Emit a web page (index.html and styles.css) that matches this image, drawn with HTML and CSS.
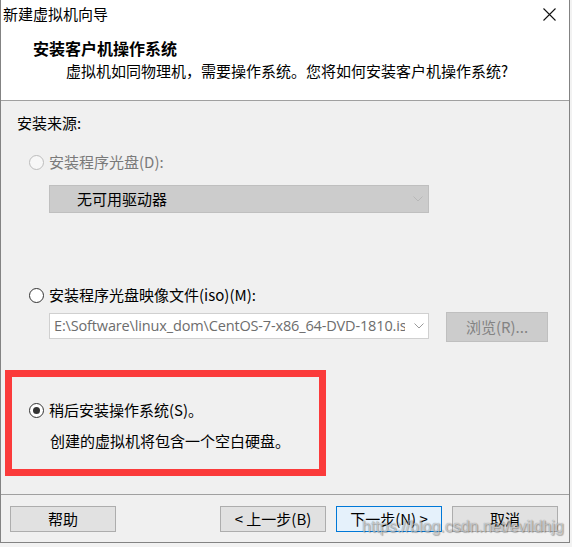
FILE: index.html
```html
<!DOCTYPE html>
<html lang="zh-CN">
<head>
<meta charset="utf-8">
<title>新建虚拟机向导</title>
<link rel="stylesheet" href="styles.css">
</head>
<body>
<div class="window">
  <div class="titlebar">
    <span class="title">新建虚拟机向导</span>
    <svg class="close" width="13" height="13" viewBox="0 0 13 13"><path d="M0.5 0.5 L12.5 12.5 M12.5 0.5 L0.5 12.5" stroke="#111" stroke-width="1.1" fill="none"/></svg>
  </div>
  <div class="header">
    <div class="heading">安装客户机操作系统</div>
    <div class="subtitle">虚拟机如同物理机，需要操作系统。您将如何安装客户机操作系统?</div>
  </div>
  <div class="content">
    <div class="section-label">安装来源:</div>
    <div class="radio-row row-disc disabled"><span class="radio"></span><span>安装程序光盘(D):</span></div>
    <div class="combo combo-disabled">
      <span class="combo-text">无可用驱动器</span>
      <svg class="chev" width="10" height="6" viewBox="0 0 10 6"><path d="M0.5 0.5 L5 5 L9.5 0.5" stroke="#b8b8b8" fill="none"/></svg>
    </div>
    <div class="radio-row row-iso"><span class="radio"></span><span>安装程序光盘映像文件(iso)(M):</span></div>
    <div class="iso-row">
      <div class="combo combo-iso">
        <span class="combo-text iso-text">E:\Software\linux_dom\CentOS-7-x86_64-DVD-1810.iso</span>
        <svg class="chev" width="10" height="6" viewBox="0 0 10 6"><path d="M0.5 0.5 L5 5 L9.5 0.5" stroke="#9a9a9a" fill="none"/></svg>
      </div>
      <div class="btn btn-disabled">浏览(R)...</div>
    </div>
    <div class="highlight">
      <div class="radio-row"><span class="radio checked"></span><span>稍后安装操作系统(S)。</span></div>
      <div class="desc">创建的虚拟机将包含一个空白硬盘。</div>
    </div>
  </div>
  <div class="footer">
    <div class="btn btn-help">帮助</div>
    <div class="nav">
      <div class="btn">&lt; 上一步(B)</div>
      <div class="btn btn-default">下一步(N) &gt;</div>
      <div class="btn">取消</div>
    </div>
  </div>
  <div class="watermark">https://blog.csdn.net/evildhjg</div>
</div>
</body>
</html>
```
FILE: styles.css
```css
* { box-sizing: border-box; }
html, body { margin: 0; padding: 0; }
body {
  background: #f2f2f2;
  font-family: "Noto Sans CJK SC", "Noto Sans", sans-serif;
  font-size: 15px;
  color: #000;
  width: 572px;
  height: 547px;
  overflow: hidden;
}
.window {
  position: relative;
  width: 570px;
  height: 543px;
  border: 1px solid #838383;
  border-top: none;
  background: #f0f0f0;
}
.titlebar {
  height: 28px;
  background: #fff;
  display: flex;
  align-items: center;
  justify-content: space-between;
  padding-left: 2px;
  padding-right: 13px;
}
.title { font-size: 15px; line-height: 20px; }
.close { display: block; }
.header {
  height: 73px;
  background: #fff;
  border-bottom: 1px solid #a0a0a0;
  padding-top: 10px;
}
.heading {
  font-size: 16px;
  font-weight: bold;
  line-height: 20px;
  padding-left: 32px;
}
.subtitle {
  font-size: 15px;
  line-height: 20px;
  margin-top: 3px;
  padding-left: 65px;
}
.content {
  height: 393px;
  padding-top: 12px;
}
.section-label {
  line-height: 20px;
  padding-left: 16px;
}
.radio-row {
  display: flex;
  align-items: center;
  gap: 5px;
  line-height: 20px;
  height: 20px;
}
.row-disc { margin-top: 19px; padding-left: 28px; }
.row-iso { margin-top: 72px; padding-left: 28px; }
.disabled { color: #7a7a7a; }
.radio {
  width: 15px;
  height: 15px;
  border-radius: 50%;
  border: 1px solid #333;
  background: #fff;
  flex: none;
  position: relative;
}
.disabled .radio { border-color: #bcbcbc; background: #f7f7f7; }
.radio.checked::after {
  content: "";
  position: absolute;
  left: 3px;
  top: 3px;
  width: 7px;
  height: 7px;
  border-radius: 50%;
  background: #333;
}
.combo {
  display: flex;
  align-items: center;
  width: 380px;
  border: 1px solid #bfbfbf;
}
.combo-text { flex: 1; white-space: nowrap; overflow: hidden; line-height: 20px; }
.chev { display: block; margin-right: 5px; flex: none; }
.combo-disabled {
  margin-top: 13px;
  margin-left: 48px;
  height: 28px;
  background: #cccccc;
  padding-left: 27px;
}
.iso-row {
  display: flex;
  align-items: flex-start;
  gap: 17px;
  margin-top: 7px;
  padding-left: 48px;
}
.combo-iso {
  margin-top: 1px;
  height: 26px;
  background: #fff;
  border-color: #d0d0d0;
  padding-left: 4px;
}
.iso-text {
  color: #6d6d6d;
  flex: none;
  width: 351px;
  margin-right: 9px;
  font-family: "Open Sans", "Noto Sans", sans-serif;
  font-size: 14.5px;
  letter-spacing: -0.15px;
}
.btn {
  width: 106px;
  height: 26px;
  background: #e1e1e1;
  border: 1px solid #adadad;
  display: flex;
  align-items: center;
  justify-content: center;
  line-height: 20px;
  white-space: nowrap;
}
.btn-disabled {
  width: 102px;
  height: 30px;
  background: #cccccc;
  border-color: #bfbfbf;
  color: #838383;
}
.highlight {
  margin-top: 28px;
  margin-left: 4px;
  width: 321px;
  height: 106px;
  border: 7px solid #fb3b3b;
  padding-top: 23px;
  padding-left: 17px;
}
.desc {
  margin-top: 11px;
  padding-left: 21px;
  line-height: 20px;
}
.footer {
  height: 48px;
  border-top: 1px solid #a0a0a0;
  padding: 11px 11px 0 9px;
  display: flex;
  justify-content: space-between;
  align-items: flex-start;
}
.nav { display: flex; gap: 10px; }
.btn-default { background: #e5f1fb; border-color: #0078d7; }
.watermark {
  position: absolute;
  left: 361px;
  top: 517px;
  font-family: "Liberation Sans", Arial, sans-serif;
  font-size: 16px;
  line-height: 20px;
  color: rgba(255, 255, 255, 0.55);
  text-shadow: 0 0 1px rgba(0, 0, 0, 0.45), 1px 1px 1px rgba(0, 0, 0, 0.25);
  white-space: nowrap;
}
```
